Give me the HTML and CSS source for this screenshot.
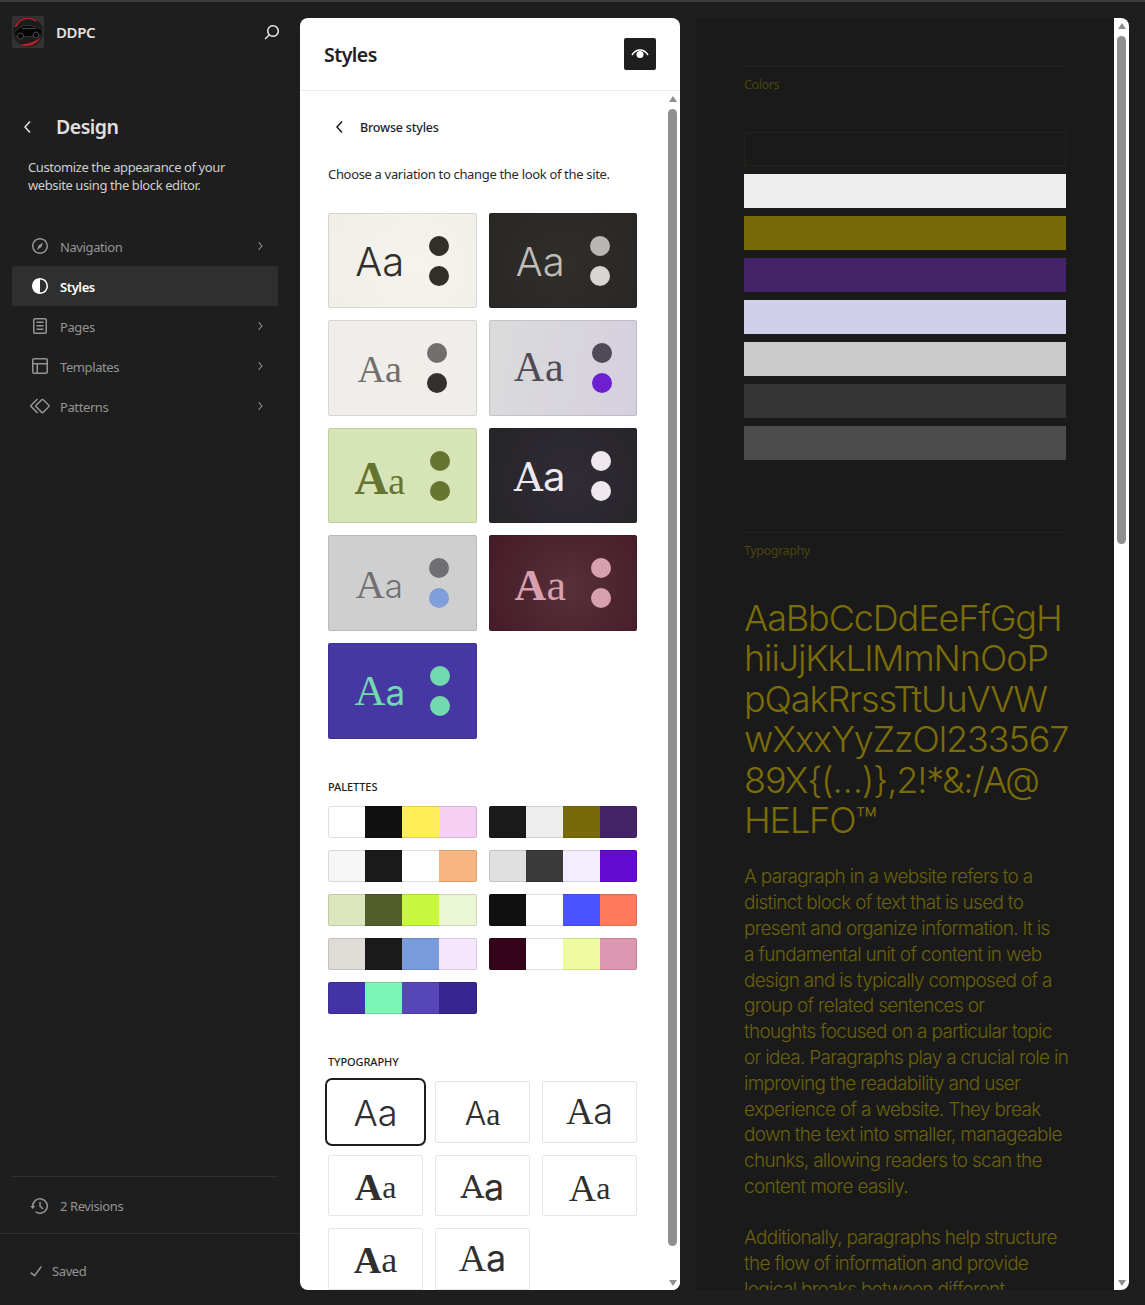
FILE: index.html
```html
<!DOCTYPE html>
<html lang="en">
<head>
  <meta charset="UTF-8">
  <title>Styles - Site Editor</title>
  <link rel="stylesheet" href="styles.css">
</head>
<body>

  <!-- Left sidebar -->
  <aside class="sidebar">
    <div class="site-head">
      <svg class="logo" viewBox="0 0 32 32">
        <rect width="32" height="32" rx="2" fill="#333"/>
        <circle cx="16" cy="16" r="15" fill="#1c1c1c"/>
        <path d="M2.500 11A14.500 14.500 0 0 1 25 4.500L23.500 5.500A12.500 12.500 0 0 0 4.500 11Z" fill="#b3202c"/>
        <path d="M8 28.500C15 28 23 26 29 21C26 28 15 33 8 28.500Z" fill="#b3202c"/>
        <path d="M2 17C6 12 10 9.500 15 9.500C20 9.500 24 11 30 13.500L30 18L27 20L7 21L3 20Z" fill="#060606" stroke="#4a4a4a" stroke-width=".6"/>
        <path d="M10 12.500L24 12.500" stroke="#555" stroke-width=".8"/>
        <circle cx="8.500" cy="20" r="3" fill="#060606" stroke="#555" stroke-width=".8"/>
        <circle cx="24" cy="19" r="3" fill="#060606" stroke="#555" stroke-width=".8"/>
      </svg>
      <span class="site-name">DDPC</span>
      <svg class="search" viewBox="0 0 24 24"><path d="M13 5c-3.300 0-6 2.700-6 6 0 1.400.5 2.700 1.300 3.700l-3.800 3.800 1.100 1.100 3.800-3.800c1 .8 2.300 1.300 3.700 1.300 3.300 0 6-2.700 6-6S16.300 5 13 5zm0 10.500c-2.500 0-4.500-2-4.500-4.500s2-4.500 4.500-4.500 4.500 2 4.500 4.500-2 4.500-4.500 4.500z"/></svg>
    </div>

    <div class="design-head">
      <svg class="icon back" viewBox="0 0 24 24"><path d="M14.600 7l-1.200-1L8 12l5.400 6 1.200-1-4.600-5z"/></svg>
      <h1>Design</h1>
    </div>
    <p class="design-desc">Customize the appearance of your<br>website using the block editor.</p>

    <nav class="nav">
      <div class="nav-item">
        <svg class="icon" viewBox="0 0 24 24"><path d="M12 4c-4.400 0-8 3.600-8 8s3.600 8 8 8 8-3.600 8-8-3.600-8-8-8zm0 14.500c-3.600 0-6.500-2.900-6.500-6.500S8.400 5.500 12 5.500s6.500 2.900 6.500 6.500-2.900 6.500-6.500 6.500zM9 16l4.500-3L15 8.400l-4.500 3L9 16z"/></svg>
        <span>Navigation</span>
        <svg class="chev" viewBox="0 0 24 24"><path d="M10.600 6L9.400 7l4.600 5-4.600 5 1.200 1 5.400-6z"/></svg>
      </div>
      <div class="nav-item active">
        <svg class="icon" viewBox="0 0 24 24"><path d="M12 4c-4.400 0-8 3.600-8 8s3.600 8 8 8 8-3.600 8-8-3.600-8-8-8zm6.500 8c0 3.600-2.900 6.500-6.500 6.500v-13c3.600 0 6.500 2.900 6.500 6.500z"/></svg>
        <span>Styles</span>
      </div>
      <div class="nav-item">
        <svg class="icon" viewBox="0 0 24 24"><path d="M15.500 7.500h-7V9h7V7.500Zm-7 3.500h7v1.500h-7V11Zm7 3.500h-7V16h7v-1.500Z"/><path d="M17 4H7a2 2 0 0 0-2 2v12a2 2 0 0 0 2 2h10a2 2 0 0 0 2-2V6a2 2 0 0 0-2-2ZM7 5.500h10a.5.5 0 0 1 .5.5v12a.5.5 0 0 1-.5.5H7a.5.5 0 0 1-.5-.5V6a.5.5 0 0 1 .5-.5Z"/></svg>
        <span>Pages</span>
        <svg class="chev" viewBox="0 0 24 24"><path d="M10.600 6L9.400 7l4.600 5-4.600 5 1.200 1 5.400-6z"/></svg>
      </div>
      <div class="nav-item">
        <svg class="icon" viewBox="0 0 24 24"><path d="M18 5.500H6a.5.5 0 00-.5.5v3h13V6a.5.5 0 00-.5-.5zm.5 5H10v8h8a.5.5 0 00.5-.5v-7.500zm-10 0h-3V18a.5.5 0 00.5.5h2.500v-8zM6 4h12a2 2 0 012 2v12a2 2 0 01-2 2H6a2 2 0 01-2-2V6a2 2 0 012-2z"/></svg>
        <span>Templates</span>
        <svg class="chev" viewBox="0 0 24 24"><path d="M10.600 6L9.400 7l4.600 5-4.600 5 1.200 1 5.400-6z"/></svg>
      </div>
      <div class="nav-item">
        <svg class="icon" viewBox="0 0 24 24"><path d="M21.300 10.800l-5.600-5.600c-.7-.7-1.800-.7-2.500 0l-5.600 5.600c-.7.7-.7 1.800 0 2.500l5.600 5.600c.3.3.8.5 1.200.5s.9-.2 1.200-.5l5.600-5.600c.8-.7.8-1.900.1-2.500zm-1 1.400l-5.600 5.600c-.1.1-.3.1-.4 0l-5.600-5.600c-.1-.1-.1-.3 0-.4l5.600-5.600s.1-.1.2-.1.1 0 .2.1l5.600 5.600c.1.1.1.3 0 .4zm-16.600-.4L10 5.500l-1-1-6.300 6.300c-.7.7-.7 1.800 0 2.500L9 19.500l1.100-1.100-6.300-6.300c-.2 0-.2-.2-.1-.3z"/></svg>
        <span>Patterns</span>
        <svg class="chev" viewBox="0 0 24 24"><path d="M10.600 6L9.400 7l4.600 5-4.600 5 1.200 1 5.400-6z"/></svg>
      </div>
    </nav>

    <div class="side-foot">
      <div class="revisions">
        <svg class="icon" viewBox="0 0 24 24"><path d="M5.500 12h1.750l-2.500 3-2.500-3H4a8 8 0 113.134 6.350l.907-1.194A6.500 6.500 0 105.500 12zm9.530 1.970l-2.280-2.280V8.500a.75.75 0 00-1.500 0V12a.747.747 0 00.218.529l1.282-.84-1.280.842 2.500 2.500a.75.75 0 101.060-1.061z"/></svg>
        <span>2 Revisions</span>
      </div>
      <div class="saved">
        <svg class="icon" viewBox="0 0 24 24"><path d="M16.700 7.100l-6.300 8.500-3.300-2.500-.9 1.200 4.500 3.400L17.900 8z"/></svg>
        <span>Saved</span>
      </div>
    </div>
  </aside>

  <div class="canvas">

    <!-- Styles panel -->
    <section class="panel">
      <header class="panel-head">
        <h2>Styles</h2>
        <div class="eye-btn">
          <svg viewBox="0 0 24 24"><path d="M4 13C6 9.800 8.800 8 12 8s6 1.800 8 5" fill="none" stroke="#fff" stroke-width="1.500"/><circle cx="12" cy="12.500" r="3.500" fill="#fff"/></svg>
        </div>
      </header>
      <div class="panel-body">
        <div class="panel-content">
          <div class="browse">
            <svg class="icon" viewBox="0 0 24 24"><path d="M14.600 7l-1.200-1L8 12l5.400 6 1.200-1-4.600-5z"/></svg>
            <span>Browse styles</span>
          </div>
          <p class="intro">Choose a variation to change the look of the site.</p>

          <div class="variations">
            <div class="variation v1"><span class="aa sans">Aa</span><div class="dots"><i></i><i></i></div></div>
            <div class="variation v2"><span class="aa sans">Aa</span><div class="dots"><i></i><i></i></div></div>
            <div class="variation v3"><span class="aa serif">Aa</span><div class="dots"><i></i><i></i></div></div>
            <div class="variation v4"><span class="aa serif">Aa</span><div class="dots"><i></i><i></i></div></div>
            <div class="variation v5"><span class="aa"><b class="serif-b big">A</b><span class="serif">a</span></span><div class="dots"><i></i><i></i></div></div>
            <div class="variation v6"><span class="aa"><span class="slab">A</span><span class="sans-r">a</span></span><div class="dots"><i></i><i></i></div></div>
            <div class="variation v7"><span class="aa"><span class="serif big">A</span><span class="sans">a</span></span><div class="dots"><i></i><i></i></div></div>
            <div class="variation v8"><span class="aa"><b class="serif-b">A</b><span class="serif">a</span></span><div class="dots"><i></i><i></i></div></div>
            <div class="variation v9"><span class="aa"><span class="serif big">A</span><span class="sans-r">a</span></span><div class="dots"><i></i><i></i></div></div>
          </div>

          <h3 class="group-label palettes-label">PALETTES</h3>
          <div class="palettes">
            <div class="palette"><i class="c-white"></i><i class="c-ink"></i><i class="c-yellow"></i><i class="c-pink"></i></div>
            <div class="palette"><i class="c-coal"></i><i class="c-mist"></i><i class="c-olive"></i><i class="c-plum"></i></div>
            <div class="palette"><i class="c-snow"></i><i class="c-coal"></i><i class="c-white"></i><i class="c-peach"></i></div>
            <div class="palette"><i class="c-silver"></i><i class="c-slate"></i><i class="c-lilac"></i><i class="c-violet"></i></div>
            <div class="palette"><i class="c-sage"></i><i class="c-moss"></i><i class="c-lime"></i><i class="c-pale"></i></div>
            <div class="palette"><i class="c-ink"></i><i class="c-white"></i><i class="c-blue"></i><i class="c-coral"></i></div>
            <div class="palette"><i class="c-stone"></i><i class="c-coal"></i><i class="c-sky"></i><i class="c-orchid"></i></div>
            <div class="palette"><i class="c-wine"></i><i class="c-white"></i><i class="c-lemon"></i><i class="c-rose"></i></div>
            <div class="palette"><i class="c-indigo"></i><i class="c-mint"></i><i class="c-iris"></i><i class="c-navy"></i></div>
          </div>

          <h3 class="group-label typo-label">TYPOGRAPHY</h3>
          <div class="type-grid">
            <div class="type-tile selected"><span class="sans t36">Aa</span></div>
            <div class="type-tile low"><span class="sans t32">A</span><span class="serif t32">a</span></div>
            <div class="type-tile up"><span class="serif t38">A</span><span class="sans t36">a</span></div>
            <div class="type-tile"><b class="serif-b t38">A</b><span class="serif t32">a</span></div>
            <div class="type-tile"><span class="slab t32">A</span><span class="sans-r t36">a</span></div>
            <div class="type-tile low"><span class="serif t38">A</span><span class="serif t32">a</span></div>
            <div class="type-tile"><b class="serif-b t38">A</b><span class="serif t36">a</span></div>
            <div class="type-tile up"><span class="serif t38">A</span><span class="sans-r t36">a</span></div>
          </div>
        </div>
        <div class="scrollbar">
          <i class="arrow-up"></i>
          <div class="thumb"></div>
          <i class="arrow-down"></i>
        </div>
      </div>
    </section>

    <!-- Style book preview -->
    <section class="preview">
      <div class="book">
        <div class="book-section colors-section">
          <h4>Colors</h4>
          <div class="swatches">
            <div class="swatch s1"></div>
            <div class="swatch s2"></div>
            <div class="swatch s3"></div>
            <div class="swatch s4"></div>
            <div class="swatch s5"></div>
            <div class="swatch s6"></div>
            <div class="swatch s7"></div>
            <div class="swatch s8"></div>
          </div>
        </div>
        <div class="book-section">
          <h4>Typography</h4>
          <div class="specimen">AaBbCcDdEeFfGgH<br>hiiJjKkLlMmNnOoP<br>pQakRrssTtUuVVW<br>wXxxYyZzOl233567<br>89X{(…)},2!*&amp;:/A@<br>HELFO™</div>
          <p class="para">A paragraph in a website refers to a<br>distinct block of text that is used to<br>present and organize information. It is<br>a fundamental unit of content in web<br>design and is typically composed of a<br>group of related sentences or<br>thoughts focused on a particular topic<br>or idea. Paragraphs play a crucial role in<br>improving the readability and user<br>experience of a website. They break<br>down the text into smaller, manageable<br>chunks, allowing readers to scan the<br>content more easily.</p>
          <p class="para">Additionally, paragraphs help structure<br>the flow of information and provide<br>logical breaks between different</p>
        </div>
      </div>
      <div class="scrollbar">
        <i class="arrow-up"></i>
        <div class="thumb short"></div>
        <i class="arrow-down"></i>
      </div>
    </section>

  </div>

</body>
</html>
```

FILE: styles.css
```css
* {
  box-sizing: border-box;
}

html, body {
  height: 100%;
}

body {
  margin: 0;
  height: 1305px;
  overflow: hidden;
  display: flex;
  background: #1e1e1e;
  border-top: 2px solid #3d3d3d;
  font-family: "Noto Sans", "Open Sans", sans-serif;
  font-size: 13px;
  letter-spacing: -0.4px;
}

h1, h2, h3, h4, p {
  margin: 0;
}

.icon {
  width: 24px;
  height: 24px;
  fill: currentColor;
  flex: none;
}

/* Sidebar */
.sidebar {
  width: 300px;
  flex: none;
  display: flex;
  flex-direction: column;
  color: #949494;
}

.site-head {
  display: flex;
  align-items: center;
  padding: 14px 16px 0 12px;
  height: 46px;
}

.logo {
  width: 32px;
  height: 32px;
  margin-right: 12px;
}

.site-name {
  font-size: 15px;
  font-weight: 600;
  color: #e0e0e0;
  flex: 1;
}

.search {
  width: 24px;
  height: 24px;
  fill: #e0e0e0;
}

.design-head {
  display: flex;
  align-items: center;
  margin-top: 63px;
  padding-left: 16px;
  color: #e0e0e0;
}

.design-head h1 {
  font-size: 19.500px;
  font-weight: 600;
  margin-left: 16px;
  line-height: 32px;
  letter-spacing: -0.5px;
}

.design-desc {
  margin: 16px 0 0 28px;
  line-height: 17.500px;
  color: #cfcfcf;
}

.nav {
  margin: 32px 22px 0 12px;
}

.nav-item {
  height: 40px;
  display: flex;
  align-items: center;
  padding: 0 10px 0 16px;
  gap: 8px;
  border-radius: 2px;
}

.nav-item span {
  flex: 1;
  padding-top: 2px;
}

.nav-item.active {
  background: #2f2f2f;
  color: #fff;
  font-weight: 600;
}

.chev {
  width: 16px;
  height: 16px;
  fill: #949494;
}

.side-foot {
  margin-top: auto;
  padding-bottom: 1px;
}

.revisions {
  margin: 0 22px 0 12px;
  height: 57px;
  display: flex;
  align-items: center;
  gap: 8px;
  padding: 1px 0 0 16px;
  border-top: 1px solid #2f2f2f;
}

.saved {
  height: 71px;
  display: flex;
  align-items: center;
  gap: 4px;
  padding: 3px 0 0 24px;
  border-top: 1px solid #2f2f2f;
}

/* Main area */
.canvas {
  flex: 1;
  display: flex;
  gap: 16px;
  padding: 16px 16px 15px 0;
  min-width: 0;
}

.panel {
  width: 380px;
  flex: none;
  background: #fff;
  border-radius: 8px;
  display: flex;
  flex-direction: column;
  overflow: hidden;
  color: #1e1e1e;
}

.panel-head {
  height: 73px;
  flex: none;
  display: flex;
  align-items: center;
  justify-content: space-between;
  padding: 0 24px;
  border-bottom: 1px solid #ededed;
}

.panel-head h2 {
  font-size: 19.500px;
  font-weight: 600;
  letter-spacing: -0.5px;
}

.eye-btn {
  width: 32px;
  height: 32px;
  background: #1e1e1e;
  border-radius: 2px;
  display: flex;
  align-items: center;
  justify-content: center;
}

.eye-btn svg {
  width: 24px;
  height: 24px;
}

.panel-body {
  flex: 1;
  min-height: 0;
  display: flex;
}

.panel-content {
  flex: 1;
  padding: 0 28px;
  overflow: hidden;
}

.browse {
  display: flex;
  align-items: center;
  height: 24px;
  margin: 24px 0 0 0;
  gap: 8px;
  font-weight: 500;
  font-size: 12.500px;
  letter-spacing: -0.2px;
}

.intro {
  margin-top: 26px;
  line-height: 18px;
  letter-spacing: -0.33px;
  color: #2a2a2a;
}

.variations {
  display: grid;
  grid-template-columns: 1fr 1fr;
  grid-template-rows: 95px 96px 95px 96px 96px;
  gap: 12px;
  margin-top: 30px;
}

.variation {
  display: flex;
  align-items: center;
  justify-content: center;
  gap: 25px;
  border-radius: 2px;
  outline: 1px solid rgba(0, 0, 0, 0.1);
  outline-offset: -1px;
}

.aa {
  font-size: 40px;
  line-height: 1;
  white-space: nowrap;
  letter-spacing: 0;
  padding-top: 3px;
}

.dots {
  display: flex;
  flex-direction: column;
  gap: 10px;
}

.dots i {
  display: block;
  width: 20px;
  height: 20px;
  border-radius: 50%;
  background: var(--dot, #000);
}

.dots i:last-child {
  background: var(--dot2, var(--dot, #000));
}

.sans {
  font-family: "Inter", sans-serif;
  font-weight: 300;
}

.sans-r {
  font-family: "Inter", sans-serif;
  font-weight: 400;
}

.serif {
  font-family: "Liberation Serif", serif;
  font-weight: 400;
}

.serif-b {
  font-family: "Liberation Serif", serif;
  font-weight: 700;
}

.slab {
  font-family: "DejaVu Serif", serif;
}

.v1 { background: radial-gradient(circle at 60% 55%, #f6f3ed, #efeee9); color: #322f2a; --dot: #322f2a; }
.v2 { background: radial-gradient(circle at 50% 55%, #302e2b, #282725); color: #c0bdb9; --dot: #b9b6b3; --dot2: #d8d6d3; }
.v3 { background: radial-gradient(circle at 60% 55%, #f1eeea, #efeeea); color: #716e6b; --dot: #716e6b; --dot2: #33302d; }
.v4 { background: linear-gradient(100deg, #dbdbdb, #d5d0de); color: #4f4a55; --dot: #4f4a55; --dot2: #6d20cf; gap: 27px; }
.v5 { background: #d7e4b5; color: #667432; --dot: #667432; }
.v6 { background: radial-gradient(circle at 55% 55%, #302c36, #252427); color: #efe9ef; --dot: #efe9ef; gap: 26px; }
.v7 { background: #d0cfcf; color: #6f6f74; --dot: #6f6f74; --dot2: #7f9edb; gap: 26px; }
.v8 { background: radial-gradient(circle at 55% 55%, #56303a, #441a26); color: #d89fae; --dot: #d89fae; }
.v9 { background: #4638a3; color: #73d9b0; --dot: #73d9b0; gap: 25px; }

.v3 .aa { font-size: 38px; padding-top: 1px; }
.v4 .aa { font-size: 42px; letter-spacing: 1px; padding-top: 0; padding-bottom: 3px; }
.v5 .aa { font-size: 38px; padding-top: 6px; }
.v6 .aa { font-size: 40px; padding-top: 2px; }
.v7 .aa { font-size: 33px; padding-top: 5px; }
.v8 .aa { font-size: 44px; }
.v9 .aa { font-size: 35px; padding-top: 0; }

.big {
  font-size: 1.230em;
}

.group-label {
  font-size: 11px;
  font-weight: 500;
  line-height: 16px;
  letter-spacing: -0.1px;
}

.palettes-label {
  margin-top: 40px;
}

.palettes {
  display: grid;
  grid-template-columns: 1fr 1fr;
  gap: 12px;
  margin-top: 11px;
}

.palette {
  height: 32px;
  display: flex;
  border-radius: 2px;
  overflow: hidden;
  outline: 1px solid rgba(0, 0, 0, 0.12);
  outline-offset: -1px;
}

.palette i {
  flex: 1;
}

.c-white { background: #fff; }
.c-ink { background: #111; }
.c-yellow { background: #ffee58; }
.c-pink { background: #f6cff4; }
.c-coal { background: #1a1a1a; }
.c-mist { background: #eee; }
.c-olive { background: #786a09; }
.c-plum { background: #442369; }
.c-snow { background: #f6f6f6; }
.c-peach { background: #f6b581; }
.c-silver { background: #e0e0e0; }
.c-slate { background: #3a3a3a; }
.c-lilac { background: #f4ecff; }
.c-violet { background: #650ad3; }
.c-sage { background: #dbe6bd; }
.c-moss { background: #525e2a; }
.c-lime { background: #c7f73e; }
.c-pale { background: #eaf6d4; }
.c-blue { background: #4b52ff; }
.c-coral { background: #ff7a5c; }
.c-stone { background: #dfdcd7; }
.c-sky { background: #7a9bdb; }
.c-orchid { background: #f5e6fd; }
.c-wine { background: #33041a; }
.c-lemon { background: #eefb9f; }
.c-rose { background: #dc98b1; }
.c-indigo { background: #4433a6; }
.c-mint { background: #7af5b3; }
.c-iris { background: #5746ba; }
.c-navy { background: #372590; }

.typo-label {
  margin-top: 40px;
}

.type-grid {
  display: grid;
  grid-template-columns: repeat(3, 1fr);
  gap: 12px;
  margin-top: 11px;
}

.type-tile {
  height: 61.600px;
  display: flex;
  align-items: center;
  justify-content: center;
  border: 1px solid #e6e6e6;
  border-radius: 2px;
  color: #2f2f2f;
  line-height: 1;
  letter-spacing: 0;
  padding-top: 3px;
}

.type-tile.low {
  padding-top: 5px;
}

.type-tile.up {
  padding-top: 0;
  padding-bottom: 2px;
}

.type-tile.selected {
  border-color: transparent;
  outline: 2px solid #1e1e1e;
  outline-offset: 1px;
  border-radius: 4px;
}

.t38 { font-size: 38px; }
.t36 { font-size: 36px; }
.t32 { font-size: 32px; }

/* Fake scrollbars, the track with its arrows */
.scrollbar {
  width: 15px;
  flex: none;
  background: #fff;
  display: flex;
  flex-direction: column;
  align-items: center;
  padding: 5px 0 4px;
}

.arrow-up, .arrow-down {
  width: 0;
  height: 0;
  border-left: 4.500px solid transparent;
  border-right: 4.500px solid transparent;
}

.arrow-up {
  border-bottom: 6px solid #8f8f8f;
}

.arrow-down {
  border-top: 6px solid #8f8f8f;
  margin-top: auto;
}

.thumb {
  width: 9px;
  height: 1137px;
  margin-top: 7px;
  background: #8f8f8f;
  border-radius: 4.500px;
}

.thumb.short {
  height: 508px;
}

/* Style book preview */
.preview {
  flex: 1;
  min-width: 0;
  display: flex;
  background: #1a1a1a;
  overflow: hidden;
}

.preview .scrollbar {
  border-top-right-radius: 8px;
  border-bottom-right-radius: 8px;
}

.book {
  flex: 1;
  min-width: 0;
  padding: 48px 48px 0;
  overflow: hidden;
  font-family: "Inter", sans-serif;
  color: #7a6c08;
}

.book-section {
  border-top: 1px solid #24231a;
  padding-top: 9px;
}

.book-section h4 {
  font-family: "Noto Sans", sans-serif;
  font-size: 12.500px;
  font-weight: 400;
  line-height: 18px;
  color: #4b440f;
}

.colors-section {
  height: 466px;
}

.swatches {
  display: flex;
  flex-direction: column;
  gap: 8px;
  margin-top: 38px;
}

.swatch {
  height: 34px;
}

.s1 { background: #1a1a1a; border: 1px solid #24231a; }
.s2 { background: #eee; }
.s3 { background: #786a09; }
.s4 { background: #442369; }
.s5 { background: #d1d0ea; }
.s6 { background: #cbcbcb; }
.s7 { background: #353535; }
.s8 { background: #4c4c4c; }

.specimen {
  margin-top: 38px;
  font-size: 36px;
  font-weight: 350;
  line-height: 40.400px;
  letter-spacing: -1.100px;
  white-space: nowrap;
}

.para {
  margin-top: 25.200px;
  font-size: 19px;
  font-weight: 300;
  line-height: 25.800px;
  letter-spacing: -0.7px;
  white-space: nowrap;
  color: #6a610c;
}

.specimen + .para {
  margin-top: 24px;
}
```
